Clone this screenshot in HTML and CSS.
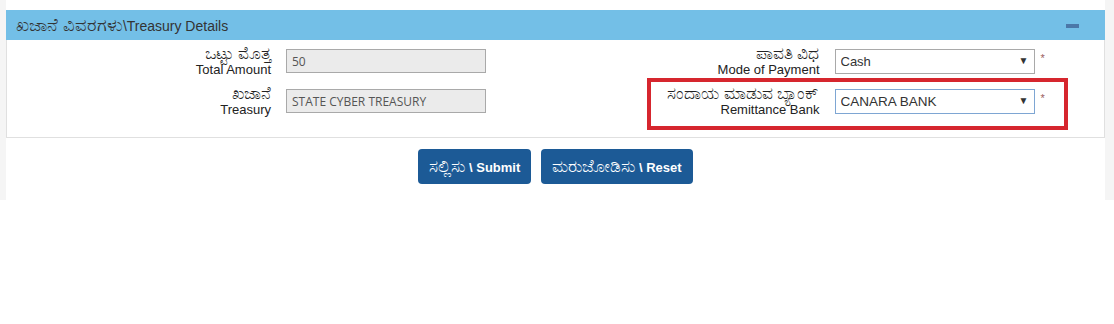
FILE: index.html
```html
<!DOCTYPE html>
<html lang="kn">
<head>
  <meta charset="UTF-8">
  <title>Treasury Details</title>
  <link rel="stylesheet" href="styles.css">
</head>
<body>
  <div class="page">
    <div class="wrap">
      <div class="panel">
        <div class="panel-head">
          <span class="panel-title"><span class="kn">ಖಜಾನೆ ವಿವರಗಳು</span>\Treasury Details</span>
          <span class="collapse"></span>
        </div>
        <div class="panel-body">
          <div class="field">
            <label class="lbl"><span class="kn">ಒಟ್ಟು ಮೊತ್ತ</span><span>Total Amount</span></label>
            <input class="txt" type="text" value="50" readonly>
            <span></span>
          </div>
          <div class="field">
            <label class="lbl"><span class="kn">ಪಾವತಿ ವಿಧ</span><span>Mode of Payment</span></label>
            <div class="sel"><select><option>Cash</option></select></div>
            <span class="req">*</span>
          </div>
          <div class="field">
            <label class="lbl"><span class="kn">ಖಜಾನೆ</span><span>Treasury</span></label>
            <input class="txt" type="text" value="STATE CYBER TREASURY" readonly>
            <span></span>
          </div>
          <div class="field">
            <label class="lbl"><span class="kn">ಸಂದಾಯ ಮಾಡುವ ಬ್ಯಾಂಕ್</span><span>Remittance Bank</span></label>
            <div class="sel focus"><select><option>CANARA BANK</option></select></div>
            <span class="req">*</span>
            <div class="highlight"></div>
          </div>
        </div>
      </div>
      <div class="actions">
        <button class="btn"><span class="kn">ಸಲ್ಲಿಸು</span> \ Submit</button>
        <button class="btn"><span class="kn">ಮರುಜೋಡಿಸು</span> \ Reset</button>
      </div>
    </div>
  </div>
</body>
</html>
```

FILE: styles.css
```css
body {
  margin: 0;
  padding: 0;
  background: #fff;
  font-family: 'Liberation Sans', Arial, sans-serif;
  color: #333;
}

.page {
  background: #f5f5f5;
  padding: 0 9px 0 6px;
}

.wrap {
  background: #fff;
  height: 200px;
  padding-top: 10px;
  box-sizing: border-box;
}

.panel {
  border: 1px solid #e0e0e0;
  border-top: none;
}

.panel-head {
  background: #73bfe7;
  height: 30px;
  margin: 0 -1px;
  display: flex;
  align-items: center;
  justify-content: space-between;
  padding: 0 26px 0 10px;
}

.panel-title {
  font-size: 14px;
  color: #333;
}

.panel-title .kn {
  font-size: 17.5px;
  line-height: 20px;
}

.collapse {
  width: 13px;
  height: 4px;
  background: #4b77a8;
  margin-top: 2px;
}

.panel-body {
  display: grid;
  grid-template-columns: 1fr 1fr;
  row-gap: 8px;
  padding: 5px 0 20px;
}

.field {
  display: grid;
  grid-template-columns: 264px 200px auto;
  column-gap: 15px;
  align-items: center;
  position: relative;
}

.lbl {
  display: flex;
  flex-direction: column;
  align-items: flex-end;
  font-size: 13px;
  line-height: 15px;
  color: #222;
}

.lbl .kn {
  font-size: 17px;
  line-height: 17px;
}

.txt {
  height: 24px;
  box-sizing: border-box;
  border: 1px solid #a9a9a9;
  background: #ebebeb;
  font-family: 'Open Sans', sans-serif;
  font-size: 12px;
  color: #555;
  padding: 0 5px;
  margin: 0;
  width: 200px;
}

.sel {
  position: relative;
  width: 200px;
}

.sel select {
  appearance: none;
  -webkit-appearance: none;
  width: 200px;
  height: 25px;
  box-sizing: border-box;
  border: 1px solid #a9a9a9;
  background: #fff;
  font-family: 'Liberation Sans', Arial, sans-serif;
  font-size: 13px;
  color: #333;
  padding: 0 5px;
  margin: 0;
  border-radius: 0;
}

.sel::after {
  content: "▼";
  position: absolute;
  right: 6px;
  top: 6px;
  font-size: 10px;
  color: #333;
  pointer-events: none;
}

.sel.focus select {
  border-color: #7ea6d3;
  font-size: 13.5px;
}

.req {
  margin-left: -9px;
  font-size: 11px;
  color: #9a6060;
  align-self: start;
  margin-top: 7px;
}

.highlight {
  position: absolute;
  left: 91px;
  top: -7px;
  width: 421px;
  height: 52px;
  box-sizing: border-box;
  border: 4px solid #d6262e;
  pointer-events: none;
}

.actions {
  display: flex;
  justify-content: center;
  gap: 10px;
  padding-top: 11px;
}

.btn {
  background: #1c5a96;
  color: #fff;
  border: none;
  border-radius: 4px;
  height: 35px;
  padding: 0 11px;
  font-family: 'Liberation Sans', Arial, sans-serif;
  font-size: 13px;
  font-weight: bold;
  cursor: pointer;
}

.btn .kn {
  font-size: 17px;
  font-weight: normal;
}
```
